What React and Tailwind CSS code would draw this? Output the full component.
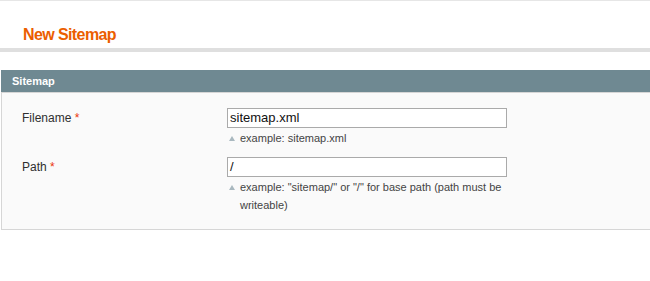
import React from 'react';

const NoteArrow = () => (
  <svg className="absolute left-[2px] top-[7px]" width="6" height="5" viewBox="0 0 6 5">
    <polygon points="3,0 6,5 0,5" fill="#a9b8bf" />
  </svg>
);

const FieldRow = ({ label, value, note, className = '' }) => (
  <div className={`flex ${className}`}>
    <div className="w-[225px] pl-[20px] pt-[1px] text-[12px] leading-[18px] text-[#2f2f2f]">
      {label} <span className="text-[#eb340a]">*</span>
    </div>
    <div className="w-[280px]">
      <div className="h-[20px] border border-[#aaa] bg-white px-[2px] text-[13px] leading-[18px] text-[#111]">
        {value}
      </div>
      <div className="relative mt-[1px] pl-[13px] text-[11px] leading-[18px] text-[#444]">
        <NoteArrow />
        {note}
      </div>
    </div>
  </div>
);

export default function App() {
  return (
    <div className="w-[650px] h-[281px] overflow-hidden bg-white border-t border-[#e6e6e6] font-['Liberation_Sans',Arial,sans-serif]">
      <div className="h-[47px] pl-[23px] pt-[24px]">
        <h3 className="text-[16px] leading-[19px] font-bold tracking-[-0.6px] text-[#eb5e00]">New Sitemap</h3>
      </div>
      <div className="h-[4px] bg-[#dfdfdf]" />

      <div className="mt-[18px] ml-[1px] w-[660px]">
        <div className="h-[22px] bg-[#6f8992] pl-[11px]">
          <h4 className="text-[11px] leading-[22px] font-bold text-white">Sitemap</h4>
        </div>
        <div className="border border-[#d6d6d6] bg-[#fafafa] pt-[15px] pb-[15px]">
          <FieldRow label="Filename" value="sitemap.xml" note="example: sitemap.xml" />
          <FieldRow
            className="mt-[10px]"
            label="Path"
            value="/"
            note={'example: "sitemap/" or "/" for base path (path must be writeable)'}
          />
        </div>
      </div>
    </div>
  );
}
